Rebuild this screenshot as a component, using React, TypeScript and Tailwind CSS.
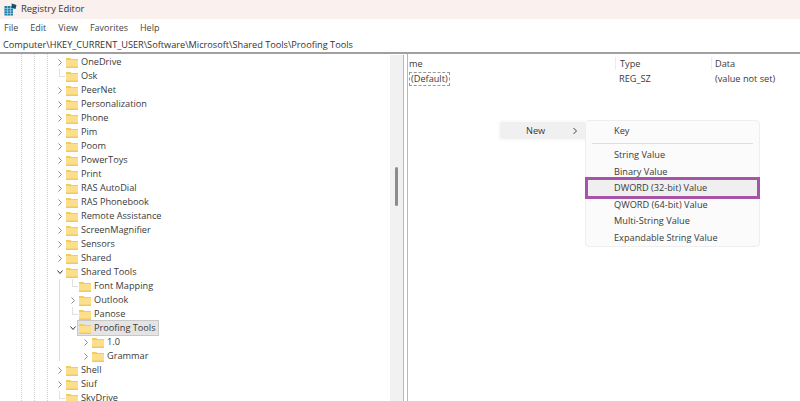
const font = { fontFamily: '"Open Sans", sans-serif' };

function Folder() {
  return (
    <svg width="12" height="11" viewBox="0 0 12 11" className="shrink-0">
      <path d="M0 1 H4.5 L5.5 2 H12 V10.5 H0 Z" fill="#f3cb62" />
      <rect x="0" y="3" width="12" height="7" fill="#fbdf8c" />
      <rect x="0" y="9.5" width="12" height="1.5" fill="#f2c95f" />
    </svg>
  );
}

function Chevron({ kind }: { kind: "closed" | "open" | "none" }) {
  if (kind === "none")
    return (
      <span className="w-[8px] h-[14px] shrink-0 relative">
        <span className="absolute left-[2px] top-0 h-[7px] border-l border-[#e0e0e0]" />
        <span className="absolute left-[2px] top-[7px] w-[6px] border-t border-[#e0e0e0]" />
      </span>
    );
  return (
    <svg width="8" height="14" viewBox="0 0 8 14" className="shrink-0" fill="none" stroke={kind === "open" ? "#333333" : "#8a8a8a"} strokeWidth="1">
      {kind === "closed" ? <path d="M1.5 4.5 L4.5 7.5 L1.5 10.5" /> : <path d="M0.5 5.5 L3 8.5 L5.5 5.5" />}
    </svg>
  );
}

type Row = { label: string; depth: 0 | 1 | 2; kind: "closed" | "open" | "none"; selected?: boolean };

const rows: Row[] = [
  { label: "OneDrive", depth: 0, kind: "closed" },
  { label: "Osk", depth: 0, kind: "none" },
  { label: "PeerNet", depth: 0, kind: "closed" },
  { label: "Personalization", depth: 0, kind: "closed" },
  { label: "Phone", depth: 0, kind: "closed" },
  { label: "Pim", depth: 0, kind: "closed" },
  { label: "Poom", depth: 0, kind: "closed" },
  { label: "PowerToys", depth: 0, kind: "closed" },
  { label: "Print", depth: 0, kind: "closed" },
  { label: "RAS AutoDial", depth: 0, kind: "closed" },
  { label: "RAS Phonebook", depth: 0, kind: "closed" },
  { label: "Remote Assistance", depth: 0, kind: "closed" },
  { label: "ScreenMagnifier", depth: 0, kind: "closed" },
  { label: "Sensors", depth: 0, kind: "closed" },
  { label: "Shared", depth: 0, kind: "closed" },
  { label: "Shared Tools", depth: 0, kind: "open" },
  { label: "Font Mapping", depth: 1, kind: "none" },
  { label: "Outlook", depth: 1, kind: "closed" },
  { label: "Panose", depth: 1, kind: "none" },
  { label: "Proofing Tools", depth: 1, kind: "open", selected: true },
  { label: "1.0", depth: 2, kind: "closed" },
  { label: "Grammar", depth: 2, kind: "closed" },
  { label: "Shell", depth: 0, kind: "closed" },
  { label: "Siuf", depth: 0, kind: "closed" },
  { label: "SkyDrive", depth: 0, kind: "none" },
];

const indent = { 0: "pl-[57px]", 1: "pl-[70px]", 2: "pl-[83px]" };

function TreeRow({ row }: { row: Row }) {
  return (
    <div className={`flex items-center h-[14px] ${indent[row.depth]}`}>
      <Chevron kind={row.kind} />
      <span className={row.selected ? "flex items-center bg-[#e4e4e4] outline outline-1 outline-[#c8c8c8] h-[14px] pr-[2px]" : "flex items-center"}>
        <span className="ml-[1px] flex"><Folder /></span>
        <span className="ml-[3px] text-[9.2px] leading-[14px] text-[#3a3a3a] whitespace-nowrap">{row.label}</span>
      </span>
    </div>
  );
}

function MenuItem({ label, highlighted }: { label: string; highlighted?: boolean }) {
  return (
    <div className={`h-[16.6px] flex items-center text-[9.2px] text-[#3a3a3a] whitespace-nowrap ${highlighted ? "bg-[#efefef] outline-[3px] outline outline-[#a653a8] mx-[2px] pl-[26px]" : "pl-[28px]"}`}>
      {label}
    </div>
  );
}

export default function App() {
  return (
    <div style={font} className="w-[800px] h-[401px] overflow-hidden bg-white flex flex-col text-[#3a3a3a]">
      <div className="h-[19px] shrink-0 bg-[#faf0ee] flex items-center pl-[4px] gap-[4px]">
        <svg width="13" height="13" viewBox="0 0 13 13">
          <rect x="0.5" y="3" width="8.5" height="9.5" fill="#1f7fa8" />
          <path d="M1 5.5H9M1 8H9M1 10.5H9M3.5 3V12.5M6.5 3V12.5" stroke="#a8d4e4" strokeWidth="0.7" />
          <path d="M7.5 0.5 L12.5 2 L11.5 6 L8 5 Z" fill="#12506e" />
        </svg>
        <span className="text-[9.4px] text-[#333333]">Registry Editor</span>
      </div>
      <div className="h-[18px] shrink-0 flex items-center pl-[4px] gap-[12px] text-[9px] text-[#444444]">
        <span>File</span>
        <span>Edit</span>
        <span>View</span>
        <span>Favorites</span>
        <span>Help</span>
      </div>
      <div className="h-[17px] shrink-0 flex items-center pl-[3px] text-[9.2px] text-[#333333] border-b-2 border-[#a0a0a0] whitespace-nowrap">
        Computer\HKEY_CURRENT_USER\Software\Microsoft\Shared Tools\Proofing Tools
      </div>
      <div className="flex flex-1 min-h-0">
        <div className="w-[390px] shrink-0 relative overflow-hidden pt-[1px]">
          <span className="absolute left-[21px] top-0 bottom-0 border-l border-dotted border-[#cfcfcf]" />
          <span className="absolute left-[34px] top-0 bottom-0 border-l border-dotted border-[#cfcfcf]" />
          <span className="absolute left-[47px] top-0 bottom-0 border-l border-dotted border-[#cfcfcf]" />
          <span className="absolute left-[59px] top-[225px] h-[82px] border-l border-[#dcdcdc]" />
          {rows.map((r) => (
            <TreeRow key={r.label} row={r} />
          ))}
        </div>
        <div className="w-[14px] shrink-0 bg-[#f1f1f1] border-r border-[#b8b8b8] relative mt-[1px]">
          <span className="absolute left-[5px] top-[112px] w-[3px] h-[39px] rounded-sm bg-[#8c8c8c]" />
        </div>
        <div className="flex-1 relative border-l border-[#b8b8b8] ml-[3px]">
          <div className="h-[17px] flex items-center text-[9.2px] pt-[2px]">
            <span className="w-[207px] pl-[1px]">me</span>
            <span className="w-[96px] pl-[4px] border-l border-[#ececec]">Type</span>
            <span className="pl-[3px] border-l border-[#ececec]">Data</span>
          </div>
          <div className="h-[15px] flex items-center text-[9.2px]">
            <span className="w-[207px] pl-[1px]">
              <span className="border border-dashed border-[#999999] px-[1px] leading-[12px] inline-block">(Default)</span>
            </span>
            <span className="w-[96px] pl-[4px]">REG_SZ</span>
            <span className="pl-[4px]">(value not set)</span>
          </div>
          <div className="absolute left-[90px] top-[66px] w-[262px] flex items-start">
            <div className="w-[87px] h-[21px] bg-[#fafafa] rounded-l-[4px] p-[2px] pr-0 shrink-0">
              <div className="h-[17px] bg-[#f0f0f0] rounded-l-[3px] flex items-center text-[9.2px] pl-[26px] gap-[27px]">
                <span>New</span>
                <svg width="6" height="8" viewBox="0 0 6 8" fill="none" stroke="#444444" strokeWidth="1"><path d="M1.5 1 L4.5 4 L1.5 7" /></svg>
              </div>
            </div>
            <div className="flex-1 h-[127px] bg-[#fbfbfb] border border-[#eeeeee] rounded-[4px] pt-[2px] flex flex-col">
              <MenuItem label="Key" />
              <div className="border-t border-[#dedede] mx-[6px] mb-[3px] mt-[3px]" />
              <MenuItem label="String Value" />
              <MenuItem label="Binary Value" />
              <MenuItem label="DWORD (32-bit) Value" highlighted />
              <MenuItem label="QWORD (64-bit) Value" />
              <MenuItem label="Multi-String Value" />
              <MenuItem label="Expandable String Value" />
            </div>
          </div>
        </div>
      </div>
    </div>
  );
}
